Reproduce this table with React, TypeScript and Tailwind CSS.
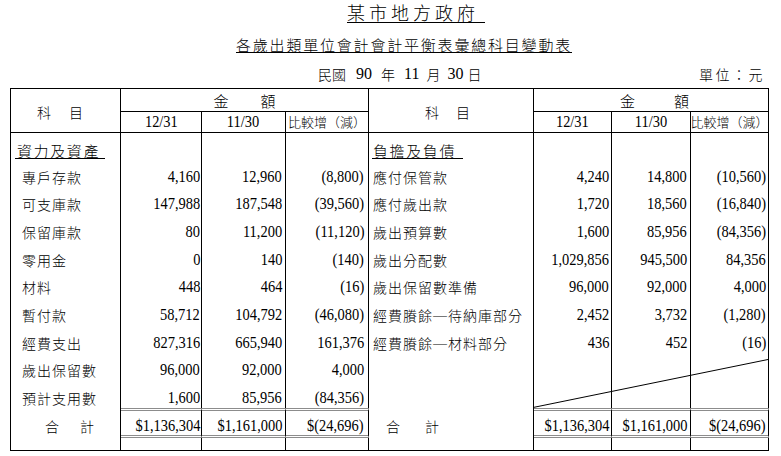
const L = [
  ["專戶存款", "4,160", "12,960", "(8,800)"],
  ["可支庫款", "147,988", "187,548", "(39,560)"],
  ["保留庫款", "80", "11,200", "(11,120)"],
  ["零用金", "0", "140", "(140)"],
  ["材料", "448", "464", "(16)"],
  ["暫付款", "58,712", "104,792", "(46,080)"],
  ["經費支出", "827,316", "665,940", "161,376"],
  ["歲出保留數", "96,000", "92,000", "4,000"],
  ["預計支用數", "1,600", "85,956", "(84,356)"],
];

const R = [
  ["應付保管款", "4,240", "14,800", "(10,560)"],
  ["應付歲出款", "1,720", "18,560", "(16,840)"],
  ["歲出預算數", "1,600", "85,956", "(84,356)"],
  ["歲出分配數", "1,029,856", "945,500", "84,356"],
  ["歲出保留數準備", "96,000", "92,000", "4,000"],
  ["經費賸餘─待納庫部分", "2,452", "3,732", "(1,280)"],
  ["經費賸餘─材料部分", "436", "452", "(16)"],
];

function Num({ v }: { v: string }) {
  return (
    <span className="block origin-right scale-x-[0.85] font-['Liberation_Serif',serif] text-[17px] leading-[14px] whitespace-nowrap">
      {v}
    </span>
  );
}

function NumCol({ vals, pr }: { vals: string[]; pr: string }) {
  return (
    <div className={`border-r border-black ${pr}`}>
      <div className="h-[27.67px]" />
      {vals.map((v, i) => (
        <div key={i} className="flex h-[27.67px] items-start justify-end pt-[9px]">
          <Num v={v} />
        </div>
      ))}
    </div>
  );
}

function TotalCell({ v, pr }: { v: string; pr: string }) {
  return (
    <div
      className={`flex items-start justify-end border-y-[3px] border-r border-double border-y-[#8c8c8c] border-r-black pt-[8px] ${pr}`}
    >
      <Num v={v} />
    </div>
  );
}

function SubHead({ label }: { label: string }) {
  return (
    <div className="flex items-center justify-center border-r border-b border-black">
      <span className="block origin-center scale-x-[0.85] font-['Liberation_Serif',serif] text-[17px] leading-[14px]">
        {label}
      </span>
    </div>
  );
}

function CompareHead() {
  return (
    <div className="flex items-center justify-center border-r border-b border-black text-[13px] leading-[14px] whitespace-nowrap">
      比較增（減）
    </div>
  );
}

export default function App() {
  return (
    <div className="h-[456px] w-[781px] overflow-hidden bg-white font-['Noto_Sans_CJK_TC',sans-serif] font-light text-black">
      {/* Titles */}
      <div className="flex pt-[2px] pl-[347px]">
        <span className="border-b border-black pr-[6px] text-[18px] leading-[20px] tracking-[4px]">
          某市地方政府
        </span>
      </div>
      <div className="mt-[14px] flex pl-[236px]">
        <span className="border-b border-black text-[15px] leading-[15px] tracking-[1.8px]">
          各歲出類單位會計會計平衡表彙總科目變動表
        </span>
      </div>
      <div className="mt-[14px] flex items-start text-[14px] leading-[14px]">
        <div className="flex items-start pl-[318px]">
          <span>民國</span>
          <span className="ml-[10px] font-['Liberation_Serif',serif] text-[16px]">90</span>
          <span className="ml-[9px]">年</span>
          <span className="ml-[9px] font-['Liberation_Serif',serif] text-[16px]">11</span>
          <span className="ml-[7px]">月</span>
          <span className="ml-[7px] font-['Liberation_Serif',serif] text-[16px]">30</span>
          <span className="ml-[4px]">日</span>
        </div>
        <span className="mr-[16px] ml-auto tracking-[2.5px]">單位：元</span>
      </div>

      {/* Table */}
      <div className="relative mt-[7px] ml-[10px] grid w-[759px] grid-cols-[110px_81px_84px_83px_165px_78px_79px_78px] grid-rows-[23px_21px_275px_30px_12px] border-t border-b border-l border-black text-[14px]">
        {/* header row 1 */}
        <div className="row-span-2 flex gap-[18px] border-r border-b border-black pt-[16px] pl-[26px] leading-[14px]">
          <span>科</span>
          <span>目</span>
        </div>
        <div className="col-span-3 flex items-center justify-center gap-[32px] border-r border-b border-black text-[15px] leading-[15px]">
          <span>金</span>
          <span>額</span>
        </div>
        <div className="row-span-2 flex gap-[17px] border-r border-b border-black pt-[16px] pl-[56px] leading-[14px]">
          <span>科</span>
          <span>目</span>
        </div>
        <div className="col-span-3 flex items-center justify-center gap-[39px] border-r border-b border-black pl-[7px] text-[15px] leading-[15px]">
          <span>金</span>
          <span>額</span>
        </div>

        {/* header row 2 */}
        <SubHead label="12/31" />
        <SubHead label="11/30" />
        <CompareHead />
        <SubHead label="12/31" />
        <SubHead label="11/30" />
        <CompareHead />

        {/* body */}
        <div className="border-r border-black">
          <div className="flex h-[27.67px] items-start pt-[10px] pl-[4px]">
            <span className="border-b border-black pr-[5px] pl-[2px] text-[15px] leading-[15px] tracking-[1.6px]">
              資力及資產
            </span>
          </div>
          {L.map((r) => (
            <div key={r[0]} className="h-[27.67px] pt-[9px] pl-[11px] leading-[14px] tracking-[1px]">
              {r[0]}
            </div>
          ))}
        </div>
        <NumCol vals={L.map((r) => r[1])} pr="pr-[1px]" />
        <NumCol vals={L.map((r) => r[2])} pr="pr-[3px]" />
        <NumCol vals={L.map((r) => r[3])} pr="pr-[4px]" />

        <div className="border-r border-black">
          <div className="flex h-[27.67px] items-start pt-[10px] pl-[3px]">
            <span className="border-b border-black pr-[7px] pl-[1px] text-[15px] leading-[15px] tracking-[1.6px]">
              負擔及負債
            </span>
          </div>
          {R.map((r) => (
            <div key={r[0]} className="h-[27.67px] pt-[9px] pl-[4px] leading-[14px] tracking-[1px] whitespace-nowrap">
              {r[0]}
            </div>
          ))}
        </div>
        <NumCol vals={R.map((r) => r[1])} pr="pr-[2px]" />
        <NumCol vals={R.map((r) => r[2])} pr="pr-[3px]" />
        <NumCol vals={R.map((r) => r[3])} pr="pr-[2px]" />

        {/* totals */}
        <div className="flex gap-[21px] border-r border-black pt-[11px] pl-[34px] leading-[14px]">
          <span>合</span>
          <span>計</span>
        </div>
        <TotalCell v="$1,136,304" pr="pr-[1px]" />
        <TotalCell v="$1,161,000" pr="pr-[3px]" />
        <TotalCell v="$(24,696)" pr="pr-[4px]" />
        <div className="flex gap-[25px] border-r border-black pt-[11px] pl-[17px] leading-[14px]">
          <span>合</span>
          <span>計</span>
        </div>
        <TotalCell v="$1,136,304" pr="pr-[2px]" />
        <TotalCell v="$1,161,000" pr="pr-[3px]" />
        <TotalCell v="$(24,696)" pr="pr-[2px]" />

        {/* trailing blank row */}
        <div className="border-r border-black" />
        <div className="border-r border-black" />
        <div className="border-r border-black" />
        <div className="border-r border-black" />
        <div className="border-r border-black" />
        <div className="border-r border-black" />
        <div className="border-r border-black" />
        <div className="border-r border-black" />

        {/* diagonal strike across the empty right-hand rows */}
        <svg
          className="pointer-events-none absolute top-[270px] left-[522px]"
          width="235"
          height="49"
          viewBox="0 0 235 49"
        >
          <line x1="0" y1="48.5" x2="235" y2="0.5" stroke="black" strokeWidth="1" />
        </svg>
      </div>
    </div>
  );
}
